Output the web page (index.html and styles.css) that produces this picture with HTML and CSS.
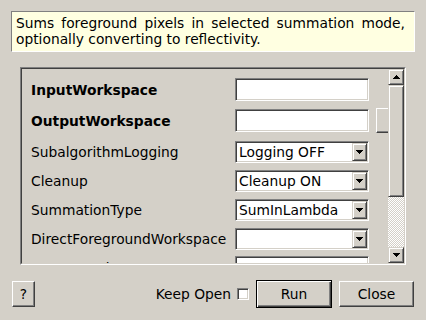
FILE: index.html
```html
<!DOCTYPE html>
<html lang="en">
<head>
    <meta charset="UTF-8">
    <meta name="viewport" content="width=device-width, initial-scale=1.0">
    <title>SumForeground</title>
    <link rel="stylesheet" href="styles.css">
</head>
<body>
    <p class="desc">Sums foreground pixels in selected summation mode, optionally converting to reflectivity.</p>

    <div class="panel">
        <div class="panel-inner">
            <div class="props">
                <div class="row row-input">
                    <span class="name bold">InputWorkspace</span>
                    <input class="field" type="text">
                </div>
                <div class="row row-input">
                    <span class="name bold">OutputWorkspace</span>
                    <input class="field" type="text">
                    <button class="browse">Browse</button>
                </div>
                <div class="row row-combo">
                    <span class="name">SubalgorithmLogging</span>
                    <div class="combo">
                        <span class="combo-text">Logging OFF</span>
                        <span class="drop"><svg width="7" height="4"><path d="M0 0h7v1H0zM1 1h5v1H1zM2 2h3v1H2zM3 3h1v1H3z"/></svg></span>
                    </div>
                </div>
                <div class="row row-combo">
                    <span class="name">Cleanup</span>
                    <div class="combo">
                        <span class="combo-text">Cleanup ON</span>
                        <span class="drop"><svg width="7" height="4"><path d="M0 0h7v1H0zM1 1h5v1H1zM2 2h3v1H2zM3 3h1v1H3z"/></svg></span>
                    </div>
                </div>
                <div class="row row-combo">
                    <span class="name">SummationType</span>
                    <div class="combo">
                        <span class="combo-text">SumInLambda</span>
                        <span class="drop"><svg width="7" height="4"><path d="M0 0h7v1H0zM1 1h5v1H1zM2 2h3v1H2zM3 3h1v1H3z"/></svg></span>
                    </div>
                </div>
                <div class="row row-combo">
                    <span class="name">DirectForegroundWorkspace</span>
                    <div class="combo">
                        <span class="combo-text"></span>
                        <span class="drop"><svg width="7" height="4"><path d="M0 0h7v1H0zM1 1h5v1H1zM2 2h3v1H2zM3 3h1v1H3z"/></svg></span>
                    </div>
                </div>
                <div class="row row-combo">
                    <span class="name">Foreground</span>
                    <input class="field" type="text">
                </div>
            </div>
            <div class="scrollbar">
                <span class="sb-btn"><svg width="7" height="4"><path d="M3 0h1v1H3zM2 1h3v1H2zM1 2h5v1H1zM0 3h7v1H0z"/></svg></span>
                <span class="sb-thumb"></span>
                <span class="sb-track"></span>
                <span class="sb-btn"><svg width="7" height="4"><path d="M0 0h7v1H0zM1 1h5v1H1zM2 2h3v1H2zM3 3h1v1H3z"/></svg></span>
            </div>
        </div>
    </div>

    <div class="footer">
        <button class="btn help">?</button>
        <span class="keep">Keep Open</span>
        <span class="check"></span>
        <button class="btn run">Run</button>
        <button class="btn close">Close</button>
    </div>
</body>
</html>
```

FILE: styles.css
```css
body {
    margin: 0;
    width: 426px;
    height: 320px;
    overflow: hidden;
    background-color: #d4d0c8;
    font-family: "DejaVu Sans", sans-serif;
    font-size: 13.8px;
    color: #000;
}
.desc {
    margin: 11px 11px 0;
    padding: 3px 9px 4px 4px;
    line-height: 16px;
    text-align: justify;
    background-color: #ffffe1;
    border: 1px solid;
    border-color: #808080 #fff #fff #808080;
}
.panel {
    width: 386px;
    height: 198px;
    box-sizing: border-box;
    margin: 15px 0 0 20px;
    border: 1px solid;
    border-color: #808080 #fff #fff #808080;
}
.panel-inner {
    display: flex;
    height: 100%;
    border: 1px solid;
    border-color: #404040 #d4d0c8 #d4d0c8 #404040;
    box-sizing: border-box;
}
.props {
    flex: 1;
    overflow: hidden;
    padding: 5px 0 0 9px;
}
.row {
    display: flex;
    align-items: center;
    height: 29px;
}
.row-input {
    height: 31px;
}
.row-input + .row-combo {
    margin-top: 1px;
}
.name {
    flex: none;
    width: 204px;
    white-space: nowrap;
    overflow: hidden;
}
.bold {
    font-weight: bold;
}
.field, .combo {
    flex: none;
    width: 134px;
    box-sizing: border-box;
    margin: 0;
    border: 1px solid;
    border-color: #808080 #fff #fff #808080;
    box-shadow: inset 1px 1px #404040, inset -1px -1px #d4d0c8;
    background-color: #fff;
}
.field {
    height: 23px;
    padding: 0 3px;
    font: inherit;
    outline: none;
}
.combo {
    display: flex;
    height: 22px;
    padding: 1px;
}
.combo-text {
    flex: 1;
    padding-left: 2px;
    line-height: 18px;
    white-space: nowrap;
}
.drop, .sb-btn, .sb-thumb {
    display: flex;
    align-items: center;
    justify-content: center;
    box-sizing: border-box;
    background-color: #d4d0c8;
    border: 1px solid;
    border-color: #d4d0c8 #404040 #404040 #d4d0c8;
    box-shadow: inset 1px 1px #fff, inset -1px -1px #808080;
}
.drop {
    width: 15px;
}
.browse {
    flex: none;
    width: 60px;
    height: 25px;
    margin-left: 7px;
    padding: 0 0 0 12px;
    text-align: left;
    font: inherit;
    background-color: #d4d0c8;
    border: 1px solid;
    border-color: #fff #404040 #404040 #fff;
    box-shadow: inset -1px -1px #808080;
}
.scrollbar {
    display: flex;
    flex-direction: column;
    width: 16px;
}
.sb-btn {
    height: 16px;
    flex: none;
}
.sb-thumb {
    height: 112px;
    flex: none;
}
.sb-track {
    flex: 1;
    background: repeating-conic-gradient(#fff 0 25%, #d4d0c8 0 50%) 0 0 / 2px 2px;
}
.footer {
    display: flex;
    align-items: center;
    height: 28px;
    margin-top: 15px;
    padding: 0 12px;
}
.btn {
    height: 26px;
    box-sizing: border-box;
    padding: 0;
    font: inherit;
    color: #000;
    background-color: #d4d0c8;
    border: 1px solid;
    border-color: #fff #404040 #404040 #fff;
    box-shadow: inset -1px -1px #808080;
}
.help {
    width: 23px;
}
.keep {
    margin-left: auto;
    margin-right: 6px;
}
.check {
    width: 12px;
    height: 12px;
    box-sizing: border-box;
    margin-right: 7px;
    background-color: #fff;
    border: 1px solid;
    border-color: #808080 #fff #fff #808080;
    box-shadow: inset 1px 1px #404040, inset -1px -1px #d4d0c8;
}
.run {
    width: 76px;
    height: 28px;
    margin-right: 7px;
    border-color: #000;
    box-shadow: inset 1px 1px #fff, inset -1px -1px #404040, inset -2px -2px #808080;
}
.close {
    width: 75px;
}
```
